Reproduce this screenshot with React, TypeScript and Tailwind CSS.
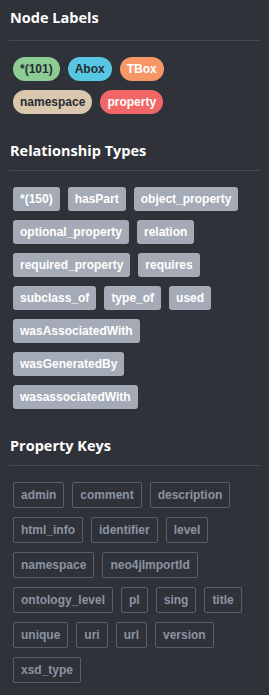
const nodeLabels = [
  { name: '*(101)', cls: 'bg-[#8dcc93] text-[#2a2c34]' },
  { name: 'Abox', cls: 'bg-[#57c7e3] text-[#2a2c34]' },
  { name: 'TBox', cls: 'bg-[#f79767] text-white' },
  { name: 'namespace', cls: 'bg-[#d9c8ae] text-[#2a2c34]' },
  { name: 'property', cls: 'bg-[#f16667] text-white' },
];

const relTypes = [
  '*(150)',
  'hasPart',
  'object_property',
  'optional_property',
  'relation',
  'required_property',
  'requires',
  'subclass_of',
  'type_of',
  'used',
  'wasAssociatedWith',
  'wasGeneratedBy',
  'wasassociatedWith',
];

const propKeys = [
  'admin',
  'comment',
  'description',
  'html_info',
  'identifier',
  'level',
  'namespace',
  'neo4jImportId',
  'ontology_level',
  'pl',
  'sing',
  'title',
  'unique',
  'uri',
  'url',
  'version',
  'xsd_type',
];

function Section({
  title,
  first,
  children,
}: {
  title: string;
  first?: boolean;
  children: React.ReactNode;
}) {
  return (
    <section>
      <h3
        className={`font-['Open_Sans',sans-serif] text-[14.5px] font-bold leading-5 text-white pl-[10px] ${
          first ? 'pt-2' : 'pt-[27px]'
        }`}
      >
        {title}
      </h3>
      <div
        className={`mx-[9px] border-t border-[#45484f] ${first ? 'mt-3' : 'mt-[9px]'}`}
      />
      <div className="pl-[13px] pr-[23px] pt-4">{children}</div>
    </section>
  );
}

export default function App() {
  return (
    <div className="w-[269px] h-[695px] bg-[#2f3239] font-['Liberation_Sans',Arial,sans-serif] overflow-hidden">
      <Section title="Node Labels" first>
        <div className="flex flex-wrap gap-x-2 gap-y-[9px]">
          {nodeLabels.map((l) => (
            <span
              key={l.name}
              className={`${l.cls} rounded-full h-6 px-[7px] text-[12px] font-bold leading-6`}
            >
              {l.name}
            </span>
          ))}
        </div>
      </Section>
      <Section title="Relationship Types">
        <div className="flex flex-wrap gap-x-2 gap-y-[9px]">
          {relTypes.map((r) => (
            <span
              key={r}
              className="bg-[#a5abb6] text-white rounded-[3px] h-6 px-[7px] text-[12px] font-bold leading-6"
            >
              {r}
            </span>
          ))}
        </div>
      </Section>
      <Section title="Property Keys">
        <div className="flex flex-wrap gap-x-2 gap-y-[9px]">
          {propKeys.map((k) => (
            <span
              key={k}
              className="border border-[#5a5e67] text-[#8b93a1] rounded-[2px] h-[26px] px-[7px] text-[12px] font-bold leading-6"
            >
              {k}
            </span>
          ))}
        </div>
      </Section>
    </div>
  );
}
